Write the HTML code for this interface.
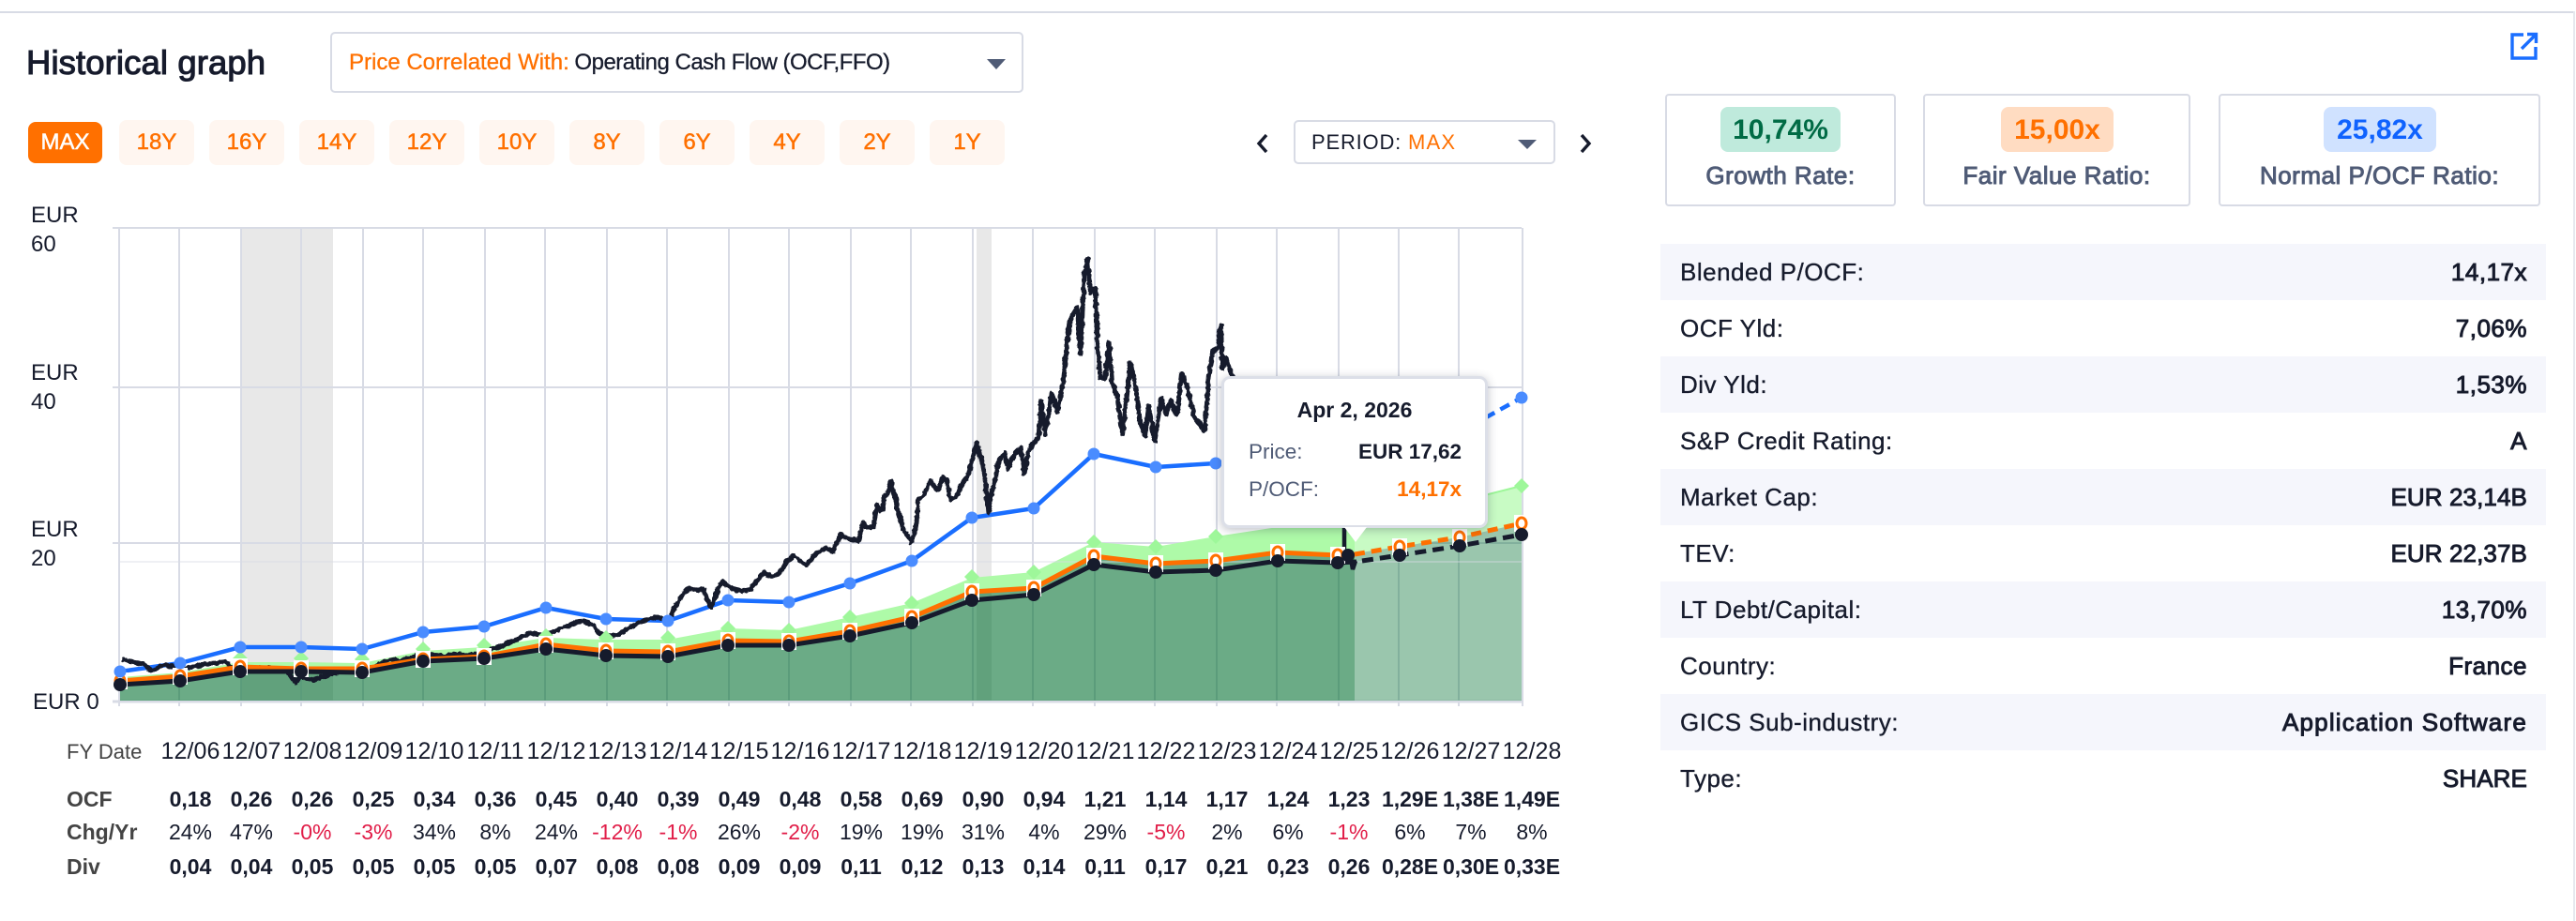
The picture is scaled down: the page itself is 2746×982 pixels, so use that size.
<!DOCTYPE html>
<html lang="en"><head><meta charset="utf-8"><title>Historical graph</title>
<style>
html,body{margin:0;padding:0;background:#fff}
body{width:2746px;height:982px;position:relative;overflow:hidden;font-family:"Liberation Sans",Arial,sans-serif;color:#161b2c}
.a{position:absolute;white-space:nowrap}
.btn{position:absolute;top:128px;width:80px;height:48px;line-height:48px;border-radius:8px;background:#fff6f0;color:#ff7000;text-align:center;font-size:24px;-webkit-text-stroke:.5px #ff7000}
.box{position:absolute;box-sizing:border-box;border:2px solid #d8dbe5;border-radius:5px;background:#fff}
.card{position:absolute;top:100px;height:120px;box-sizing:border-box;border:2px solid #d8dbe5;border-radius:4px;text-align:center}
.card b{display:block;position:absolute;top:12px;height:48px;line-height:50px;border-radius:8px;font-size:30px;font-weight:bold}
.card span{position:absolute;left:0;right:0;top:68px;line-height:34px;font-size:26px;letter-spacing:.5px;color:#4f5b76;-webkit-text-stroke:.95px #4f5b76}
.row{position:absolute;left:1770px;width:944px;height:60px;line-height:60px;font-size:26px;letter-spacing:.5px}
.row.s{background:#f5f6fc}
.row i{font-style:normal;position:absolute;left:21px;-webkit-text-stroke:.35px #161b2c}
.row u{text-decoration:none;position:absolute;right:20px;-webkit-text-stroke:.95px #161b2c}
.t{position:absolute;left:170.5px;display:grid;grid-template-columns:repeat(23,65px);text-align:center;line-height:30px;font-size:23px;white-space:nowrap}
.t span{display:block}
.bd{font-weight:bold}
.r{color:#e11d48}
.lab{position:absolute;left:71px;line-height:30px;font-size:23px;color:#444;white-space:nowrap}
.yl{position:absolute;left:33px;font-size:24px;line-height:31px}
.tip{position:absolute;left:1302px;top:401px;width:284px;height:162px;box-sizing:border-box;border:3px solid #dcdfe8;border-radius:9px;background:#fff;box-shadow:0 2px 10px rgba(40,45,70,.3)}
.tip div{position:absolute;white-space:nowrap}
</style></head><body>

<div class="a" style="left:0;top:12px;width:2743px;height:2px;background:#d8dbe5"></div>
<div class="a" style="left:2743px;top:12px;width:2px;height:970px;background:#e6e8ee"></div>

<div class="a" style="left:28px;top:46px;font-size:36.5px;line-height:42px;letter-spacing:.1px;-webkit-text-stroke:1.1px #161b2c">Historical graph</div>

<div class="box" style="left:352px;top:34px;width:739px;height:65px"></div>
<div class="a" style="left:372px;top:50px;line-height:34px;font-size:24px;letter-spacing:0;-webkit-text-stroke:.3px"><span style="color:#ff7000;-webkit-text-stroke:.3px #ff7000">Price Correlated With:</span> <span style="letter-spacing:-.5px;margin-left:-1px">Operating Cash Flow (OCF,FFO)</span></div>
<svg class="a" style="left:1052px;top:63px" width="20" height="11"><path d="M0 0H20L10 11Z" fill="#4f5b76"/></svg>

<div class="btn" style="left:30px;top:130px;width:79px;height:44px;line-height:44px;background:#ff7000;color:#fff;-webkit-text-stroke:.5px #fff">MAX</div>
<div class="btn" style="left:127px">18Y</div>
<div class="btn" style="left:223px">16Y</div>
<div class="btn" style="left:319px">14Y</div>
<div class="btn" style="left:415px">12Y</div>
<div class="btn" style="left:511px">10Y</div>
<div class="btn" style="left:607px">8Y</div>
<div class="btn" style="left:703px">6Y</div>
<div class="btn" style="left:799px">4Y</div>
<div class="btn" style="left:895px">2Y</div>
<div class="btn" style="left:991px">1Y</div>

<svg class="a" style="left:1336px;top:140px" width="20" height="26"><path d="M14 4L6 13L14 22" fill="none" stroke="#161b2c" stroke-width="3.4"/></svg>
<div class="box" style="left:1379px;top:128px;width:279px;height:47px"></div>
<div class="a" style="left:1398px;top:137px;line-height:30px;font-size:22px;letter-spacing:.8px">PERIOD: <span style="color:#ff7000;letter-spacing:1.2px">MAX</span></div>
<svg class="a" style="left:1618px;top:149px" width="20" height="10"><path d="M0 0H20L10 10Z" fill="#4f5b76"/></svg>
<svg class="a" style="left:1680px;top:140px" width="20" height="26"><path d="M6 4L14 13L6 22" fill="none" stroke="#161b2c" stroke-width="3.4"/></svg>

<svg class="a" style="left:2670px;top:30px" width="40" height="40" fill="none" stroke="#1a6eff" stroke-width="3.4"><path d="M20 7H8V32H33V20"/><path d="M18 22L33 7M24 6.500H33.500V16"/></svg>

<div class="card" style="left:1775px;width:246px"><b style="left:57px;width:128px;background:#bfeadc;color:#006b45">10,74%</b><span>Growth Rate:</span></div>
<div class="card" style="left:2050px;width:285px"><b style="left:81px;width:120px;background:#ffdcc2;color:#ff7000">15,00x</b><span>Fair Value Ratio:</span></div>
<div class="card" style="left:2365px;width:343px"><b style="left:110px;width:120px;background:#d0e2ff;color:#0f62fe">25,82x</b><span>Normal P/OCF Ratio:</span></div>

<div class="row s" style="top:260px"><i>Blended P/OCF:</i><u>14,17x</u></div>
<div class="row" style="top:320px"><i>OCF Yld:</i><u>7,06%</u></div>
<div class="row s" style="top:380px"><i>Div Yld:</i><u>1,53%</u></div>
<div class="row" style="top:440px"><i>S&amp;P Credit Rating:</i><u>A</u></div>
<div class="row s" style="top:500px"><i>Market Cap:</i><u style="letter-spacing:.1px">EUR 23,14B</u></div>
<div class="row" style="top:560px"><i>TEV:</i><u style="letter-spacing:.1px">EUR 22,37B</u></div>
<div class="row s" style="top:620px"><i>LT Debt/Capital:</i><u>13,70%</u></div>
<div class="row" style="top:680px"><i>Country:</i><u>France</u></div>
<div class="row s" style="top:740px"><i>GICS Sub-industry:</i><u style="letter-spacing:1.2px">Application Software</u></div>
<div class="row" style="top:800px"><i>Type:</i><u style="letter-spacing:.1px">SHARE</u></div>

<div class="yl" style="top:214px">EUR<br>60</div>
<div class="yl" style="top:382px">EUR<br>40</div>
<div class="yl" style="top:549px">EUR<br>20</div>
<div class="yl" style="top:733px;left:35px;white-space:nowrap">EUR 0</div>

<svg class="a" style="left:0;top:0" width="2746" height="982" viewBox="0 0 2746 982">
<defs>
<filter id="j" filterUnits="userSpaceOnUse" x="100" y="230" width="1300" height="520" color-interpolation-filters="sRGB"><feTurbulence type="fractalNoise" baseFrequency="0.2" numOctaves="2" seed="4"/><feDisplacementMap in="SourceGraphic" scale="4" xChannelSelector="R" yChannelSelector="G"/></filter>
<g id="o"><rect x="-8" y="-9" width="16" height="18" fill="#fff"/><ellipse rx="5" ry="6" fill="#fff" stroke="#ff7000" stroke-width="3"/></g>
<path id="d" d="M0-8L8 0 0 8-8 0Z" fill="#9ef79a"/>
<circle id="k" r="7" fill="#161b2c"/>
<circle id="b" r="6.500" fill="#4a8cff"/>
</defs>
<rect x="257" y="243" width="98" height="504" fill="#e8e8e8"/>
<rect x="1041" y="243" width="16" height="504" fill="#e8e8e8"/>
<path fill="none" stroke="#d8dbe5" stroke-width="2" d="M127 243V753M191 243V753M257 243V753M321 243V753M387 243V753M451 243V753M517 243V753M581 243V753M647 243V753M711 243V753M777 243V753M841 243V753M907 243V753M971 243V753M1037 243V753M1101 243V753M1167 243V753M1231 243V753M1297 243V753M1361 243V753M1427 243V753M1491 243V753M1555 243V753M1623 243V753M120 243H1622M120 413H1622M120 579H1622"/>
<path stroke="#d8dbe5" stroke-width="3" d="M120 748H1624"/>
<path fill="#aefaa8" d="M128 722L192 717L256 706L321 706L386 707L451 694L516 690L582 680L646 682L712 682L776 670L841 672L906 658L972 643L1036 616L1102 610L1166 578L1232 583L1296 572L1362 562L1426 558L1444 555V600L1426 592L1362 589L1296 598L1232 601L1166 593L1102 627L1036 631L972 658L906 673L841 684L776 683L712 695L646 694L582 687L516 700L451 703L386 713L321 713L256 711L192 721L128 726Z"/>
<path fill="#c8fbc4" d="M1444 555L1491 548L1555 535L1622 518V558L1555 573L1491 583L1444 590Z"/>
<path fill="#006f2f" fill-opacity=".58" d="M128 726L192 721L256 711L321 713L386 713L451 703L516 700L582 687L646 694L712 695L776 683L841 684L906 673L972 658L1036 631L1102 627L1166 593L1232 601L1296 598L1362 589L1426 592L1444 592V747H128Z"/>
<path fill="#006f2f" fill-opacity=".396" d="M1444 590L1491 583L1555 573L1622 558V747H1444Z"/>
<path d="M127 599H1622" stroke="#d8dbe5" stroke-width="2" opacity=".4"/>

<path fill="none" stroke="#9ef79a" stroke-width="2" d="M1444 555L1491 548L1555 535L1622 518"/>
<path fill="none" stroke="#1a6eff" stroke-width="4.500" d="M128 716L192 707L256 690L321 690L386 692L451 674L516 668L582 648L646 660L712 662L776 640L841 642L906 622L972 598L1036 552L1102 542L1166 484L1232 498L1296 494L1444 470"/>
<path fill="none" stroke="#1a6eff" stroke-width="4.500" stroke-dasharray="11 7" d="M1444 470L1555 461L1586 444L1622 424"/>

<path fill="none" stroke="#161b2c" stroke-width="5" stroke-linejoin="round" filter="url(#j)" d="M130 703L141 706L153 708L158 712L163 715L170 711L176 709L185 711L194 713L206 711L219 708L230 707L240 705L245 710L250 713L260 714L270 715L278 712L286 712L296 714L306 715L312 724L316 728L321 720L328 724L334 725L345 721L357 718L367 714L383 714L393 712L403 710L410 705L418 703L427 704L436 702L445 698L454 697L464 699L474 700L482 698L490 697L498 699L505 698L510 695L520 693L531 690L541 686L551 682L558 678L566 675L576 677L587 675L597 670L607 667L615 663L622 662L628 665L633 667L638 675L648 678L658 677L668 671L679 665L689 661L699 658L706 660L712 663L718 650L724 640L729 632L735 627L742 629L750 628L754 640L758 648L764 632L770 620L776 625L781 628L790 630L800 628L808 618L815 610L822 615L830 612L838 600L846 592L853 598L860 603L870 590L880 585L888 588L896 570L905 575L915 577L920 557L923 562L931 562L935 538L939 545L941 543L942.500 530L946 527L950 513L952 524L954 528L957 545L960 553L963 565L965.500 568L969 574L971 578L975 568L977 557L979 533L985 528L989 518L992 513L997 520L1000 522L1006 508L1009.500 513L1013 533L1017 531L1021 527L1025 517L1030 510L1034 500L1038 485L1041 472L1044 485L1046 487L1048 500L1050 510L1052 530L1053.500 547L1057 525L1061 513L1063 498L1065 490L1069 486L1071 483L1074.500 500L1077 492L1080 487L1084 482L1088 477L1090 492L1092 505L1095.600 483L1098 480L1101 473L1104 470L1107 467L1110 428L1112 445L1114 463L1118 440L1121 420L1124 428L1127 440L1131 420L1134 403L1137 370L1140 343L1144 335L1148.400 328L1150 350L1152 377L1154 330L1156 290L1159.500 276L1162.600 312L1167.500 307L1170 367L1173 403L1178 403L1182 365L1185.500 407L1191 423L1196.500 463L1201 425L1205 387L1209 405L1212 423L1215.400 450L1220.600 465L1224 433L1228 452L1231 470L1235 445L1238 425L1243 442L1248 427L1252 438L1255 442L1259.500 398L1265 410L1270 432L1274 447L1279 452L1283.600 460L1287 425L1289.500 393L1293 375L1298 370L1301.500 347L1303 393L1306.700 382L1313.600 400L1320 420"/>
<path fill="none" stroke="#161b2c" stroke-width="4.500" d="M1433 560V600M1439 590L1442 607L1445 598"/>

<path fill="none" stroke="#ff7000" stroke-width="5" d="M128 726L192 721L256 711L321 713L386 713L451 703L516 700L582 687L646 694L712 695L776 683L841 684L906 673L972 658L1036 631L1102 627L1166 593L1232 601L1296 598L1362 589L1426 592L1444 592"/>
<path fill="none" stroke="#ff7000" stroke-width="5" stroke-dasharray="11 7" d="M1444 591L1491 583L1555 573L1622 558"/>
<path fill="none" stroke="#161b2c" stroke-width="5" d="M128 730L192 726L256 716L321 716L386 717L451 705L516 702L582 692L646 699L712 700L776 688L841 688L906 678L972 664L1036 640L1102 634L1166 602L1232 610L1296 608L1362 598L1426 600L1446 599"/>
<path fill="none" stroke="#161b2c" stroke-width="5" stroke-dasharray="12 7" d="M1452 598L1492 592L1556 582L1622 570"/>

<g>
<use href="#d" x="256" y="702"/><use href="#d" x="321" y="702"/><use href="#d" x="386" y="703"/><use href="#d" x="451" y="692"/><use href="#d" x="516" y="688"/><use href="#d" x="582" y="678"/><use href="#d" x="646" y="680"/><use href="#d" x="712" y="680"/><use href="#d" x="776" y="670"/><use href="#d" x="841" y="672"/><use href="#d" x="906" y="658"/><use href="#d" x="972" y="643"/><use href="#d" x="1036" y="615"/><use href="#d" x="1102" y="610"/><use href="#d" x="1166" y="578"/><use href="#d" x="1232" y="583"/><use href="#d" x="1296" y="572"/><use href="#d" x="1622" y="518"/>
</g>
<g>
<use href="#o" x="128" y="726"/><use href="#o" x="192" y="721"/><use href="#o" x="256" y="711"/><use href="#o" x="321" y="713"/><use href="#o" x="386" y="713"/><use href="#o" x="451" y="703"/><use href="#o" x="516" y="700"/><use href="#o" x="582" y="687"/><use href="#o" x="646" y="694"/><use href="#o" x="712" y="695"/><use href="#o" x="776" y="683"/><use href="#o" x="841" y="684"/><use href="#o" x="906" y="673"/><use href="#o" x="972" y="658"/><use href="#o" x="1036" y="631"/><use href="#o" x="1102" y="627"/><use href="#o" x="1166" y="593"/><use href="#o" x="1232" y="601"/><use href="#o" x="1296" y="598"/><use href="#o" x="1362" y="589"/><use href="#o" x="1426" y="592"/><use href="#o" x="1492" y="583"/><use href="#o" x="1556" y="573"/><use href="#o" x="1622" y="558"/>
</g>
<g>
<use href="#k" x="128" y="730"/><use href="#k" x="192" y="726"/><use href="#k" x="256" y="716"/><use href="#k" x="321" y="716"/><use href="#k" x="386" y="717"/><use href="#k" x="451" y="705"/><use href="#k" x="516" y="702"/><use href="#k" x="582" y="692"/><use href="#k" x="646" y="699"/><use href="#k" x="712" y="700"/><use href="#k" x="776" y="688"/><use href="#k" x="841" y="688"/><use href="#k" x="906" y="678"/><use href="#k" x="972" y="664"/><use href="#k" x="1036" y="640"/><use href="#k" x="1102" y="634"/><use href="#k" x="1166" y="602"/><use href="#k" x="1232" y="610"/><use href="#k" x="1296" y="608"/><use href="#k" x="1362" y="598"/><use href="#k" x="1426" y="600"/><use href="#k" x="1492" y="592"/><use href="#k" x="1556" y="582"/><use href="#k" x="1622" y="570"/><use href="#k" x="1437" y="592"/>
</g>
<g>
<use href="#b" x="128" y="716"/><use href="#b" x="192" y="707"/><use href="#b" x="256" y="690"/><use href="#b" x="321" y="690"/><use href="#b" x="386" y="692"/><use href="#b" x="451" y="674"/><use href="#b" x="516" y="668"/><use href="#b" x="582" y="648"/><use href="#b" x="646" y="660"/><use href="#b" x="712" y="662"/><use href="#b" x="776" y="640"/><use href="#b" x="841" y="642"/><use href="#b" x="906" y="622"/><use href="#b" x="972" y="598"/><use href="#b" x="1036" y="552"/><use href="#b" x="1102" y="542"/><use href="#b" x="1166" y="484"/><use href="#b" x="1232" y="498"/><use href="#b" x="1296" y="494"/><use href="#b" x="1622" y="424"/>
</g>
</svg>

<div class="tip">
<div style="left:0;right:0;top:18px;text-align:center;font-size:23px;line-height:30px;font-weight:bold">Apr 2, 2026</div>
<div style="left:26px;top:63px;font-size:22.5px;line-height:30px;color:#4f5b76">Price:</div>
<div style="right:25px;top:63px;font-size:22.5px;line-height:30px;font-weight:bold">EUR 17,62</div>
<div style="left:26px;top:103px;font-size:22.5px;line-height:30px;color:#4f5b76">P/OCF:</div>
<div style="right:25px;top:103px;font-size:22.5px;line-height:30px;font-weight:bold;color:#ff7000">14,17x</div>
</div>
<svg class="a" style="left:1433px;top:560px" width="24" height="19"><path d="M0 2H24L12 18Z" fill="#fff"/></svg>

<div class="lab" style="top:787px;font-size:22px">FY Date</div>
<div class="lab bd" style="top:837px">OCF</div>
<div class="lab bd" style="top:872px">Chg/Yr</div>
<div class="lab bd" style="top:909px">Div</div>

<div class="t" style="top:786px;font-size:25px;letter-spacing:.1px"><span>12/06</span><span>12/07</span><span>12/08</span><span>12/09</span><span>12/10</span><span>12/11</span><span>12/12</span><span>12/13</span><span>12/14</span><span>12/15</span><span>12/16</span><span>12/17</span><span>12/18</span><span>12/19</span><span>12/20</span><span>12/21</span><span>12/22</span><span>12/23</span><span>12/24</span><span>12/25</span><span>12/26</span><span>12/27</span><span>12/28</span></div>
<div class="t bd" style="top:837px"><span>0,18</span><span>0,26</span><span>0,26</span><span>0,25</span><span>0,34</span><span>0,36</span><span>0,45</span><span>0,40</span><span>0,39</span><span>0,49</span><span>0,48</span><span>0,58</span><span>0,69</span><span>0,90</span><span>0,94</span><span>1,21</span><span>1,14</span><span>1,17</span><span>1,24</span><span>1,23</span><span>1,29E</span><span>1,38E</span><span>1,49E</span></div>
<div class="t" style="top:872px"><span>24%</span><span>47%</span><span class="r">-0%</span><span class="r">-3%</span><span>34%</span><span>8%</span><span>24%</span><span class="r">-12%</span><span class="r">-1%</span><span>26%</span><span class="r">-2%</span><span>19%</span><span>19%</span><span>31%</span><span>4%</span><span>29%</span><span class="r">-5%</span><span>2%</span><span>6%</span><span class="r">-1%</span><span>6%</span><span>7%</span><span>8%</span></div>
<div class="t bd" style="top:909px"><span>0,04</span><span>0,04</span><span>0,05</span><span>0,05</span><span>0,05</span><span>0,05</span><span>0,07</span><span>0,08</span><span>0,08</span><span>0,09</span><span>0,09</span><span>0,11</span><span>0,12</span><span>0,13</span><span>0,14</span><span>0,11</span><span>0,17</span><span>0,21</span><span>0,23</span><span>0,26</span><span>0,28E</span><span>0,30E</span><span>0,33E</span></div>

</body></html>
